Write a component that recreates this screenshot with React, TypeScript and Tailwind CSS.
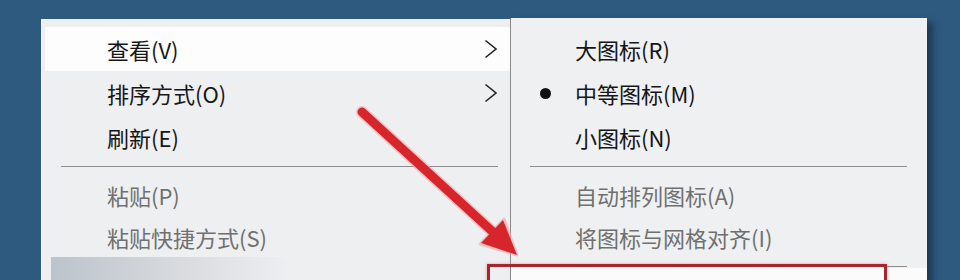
import React from "react";

const font = { fontFamily: '"Noto Sans CJK SC", "Noto Sans", sans-serif' };

function Chevron() {
  return (
    <svg width="14" height="20" viewBox="0 0 14 20" className="shrink-0">
      <polyline points="1.5,1.5 12,10 1.5,18.5" fill="none" stroke="#222" strokeWidth="1.6" />
    </svg>
  );
}

function LeftRow({ label, hot, sub, disabled, h = "h-[44px]" }: { label: string; hot?: boolean; sub?: boolean; disabled?: boolean; h?: string }) {
  return (
    <div
      className={`${h} ml-[3px] pl-[62px] pr-[12px] flex items-center justify-between ${hot ? "bg-[#fdfdfd]" : ""} ${disabled ? "text-[#707070]" : "text-[#161616]"}`}
    >
      <span>{label}</span>
      {sub ? <Chevron /> : null}
    </div>
  );
}

function SubRow({ label, bullet, disabled, h = "h-[44px]" }: { label: string; bullet?: boolean; disabled?: boolean; h?: string }) {
  return (
    <div className={`${h} pl-[29px] flex items-center ${disabled ? "text-[#707070]" : "text-[#161616]"}`}>
      <span className="w-[11px] h-[11px] flex items-center justify-center shrink-0">
        {bullet ? <span className="w-[11px] h-[11px] rounded-full bg-[#111]" /> : null}
      </span>
      <span className="ml-[24px]">{label}</span>
    </div>
  );
}

export default function App() {
  return (
    <div
      className="relative w-[960px] h-[280px] overflow-hidden bg-[#2e5a7f] flex items-start pl-[41px] pt-[18px] text-[22px] leading-none"
      style={font}
    >
      {/* left context menu */}
      <div className="w-[469px] h-[300px] mt-[1px] pt-[8px] bg-[#eeeff1] border-l border-[#f6f7f9] flex flex-col shrink-0">
        <LeftRow label="查看(V)" hot sub />
        <LeftRow label="排序方式(O)" sub />
        <LeftRow label="刷新(E)" />
        <div className="h-[14px] flex items-center ml-[19px] mr-[12px]">
          <div className="h-px w-full bg-[#8d8d8d]" />
        </div>
        <LeftRow label="粘贴(P)" disabled />
        <LeftRow label="粘贴快捷方式(S)" disabled h="h-[40px]" />
        <div className="ml-[9px] w-[240px] h-[30px] bg-gradient-to-r from-[#bcc3cb] via-[#d6d9dd] to-[#eeeff1]" />
      </div>

      {/* submenu */}
      <div className="w-[417px] h-[300px] pt-[9px] bg-[#eff0f2] border-l border-[#8a8a8a] flex flex-col shrink-0 shadow-[6px_4px_6px_rgba(20,45,70,0.7)]">
        <SubRow label="大图标(R)" />
        <SubRow label="中等图标(M)" bullet />
        <SubRow label="小图标(N)" />
        <div className="h-[14px] flex items-center ml-[19px] mr-[20px]">
          <div className="h-px w-full bg-[#8d8d8d]" />
        </div>
        <SubRow label="自动排列图标(A)" disabled />
        <SubRow label="将图标与网格对齐(I)" disabled h="h-[40px]" />
        <div className="mt-[9px] h-px ml-[19px] mr-[20px] bg-[#8d8d8d]" />
        <div className="mt-[1px] h-[40px] bg-[#fbfbfc]" />
      </div>

      {/* annotation: red box */}
      <div className="absolute left-[487px] top-[264px] w-[400px] h-[40px] border-[3px] border-[#a5262c] shadow-[0_0_3px_rgba(255,110,110,0.7)]" />

      {/* annotation: red arrow */}
      <svg className="absolute left-0 top-0" width="960" height="280" viewBox="0 0 960 280">
        <line x1="362" y1="112" x2="494" y2="233" stroke="#f4a5a5" strokeWidth="12" strokeLinecap="round" opacity="0.6" />
        <polygon points="517,255 480,244 504,219" fill="#f4a5a5" stroke="#f4a5a5" strokeWidth="3" strokeLinejoin="round" opacity="0.6" />
        <line x1="362" y1="112" x2="494" y2="233" stroke="#d6262c" strokeWidth="9" strokeLinecap="round" />
        <polygon points="517,255 481,243 503,220" fill="#d6262c" />
      </svg>
    </div>
  );
}
